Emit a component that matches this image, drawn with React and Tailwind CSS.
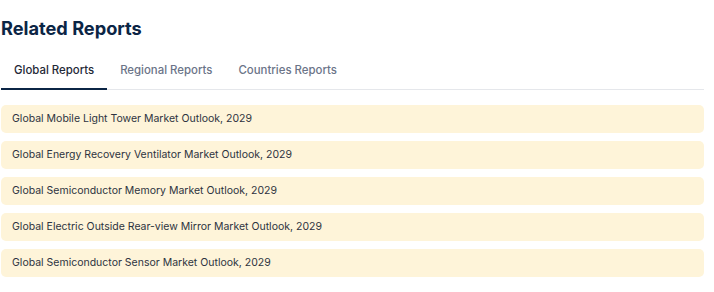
import React, { useState } from 'react';

const tabs = ['Global Reports', 'Regional Reports', 'Countries Reports'];

const reports = [
  'Global Mobile Light Tower Market Outlook, 2029',
  'Global Energy Recovery Ventilator Market Outlook, 2029',
  'Global Semiconductor Memory Market Outlook, 2029',
  'Global Electric Outside Rear-view Mirror Market Outlook, 2029',
  'Global Semiconductor Sensor Market Outlook, 2029',
];

function App() {
  const [active, setActive] = useState(0);

  return (
    <div className="w-[714px] h-[292px] bg-white pl-[1px] pt-[15px] font-['Inter',sans-serif]">
      <div className="w-[703px]">
        <h2 className="text-[18.2px] leading-[26px] font-bold text-[#0b2545]">Related Reports</h2>
        <div className="flex mt-[20px] border-b border-[#e5e7eb]">
          {tabs.map((t, i) => (
            <button
              key={t}
              onClick={() => setActive(i)}
              className={
                i === active
                  ? 'px-[13px] pt-[2px] pb-[10px] text-[11.4px] leading-[15px] font-medium text-[#1f2937] border-b-2 border-[#0b2545] -mb-[1px]'
                  : 'px-[13px] pt-[2px] pb-[10px] text-[11.4px] leading-[15px] font-medium text-[#6b7488] border-b-2 border-transparent -mb-[1px]'
              }
            >
              {t}
            </button>
          ))}
        </div>
        <div className="flex flex-col gap-[8px] mt-[15px]">
          {reports.map((r) => (
            <div key={r} className="h-[28px] flex items-center px-[11px] rounded-[5px] bg-[#fef4d9] text-[10.5px] text-[#2d3340]">
              {r}
            </div>
          ))}
        </div>
      </div>
    </div>
  );
}

export default App;
